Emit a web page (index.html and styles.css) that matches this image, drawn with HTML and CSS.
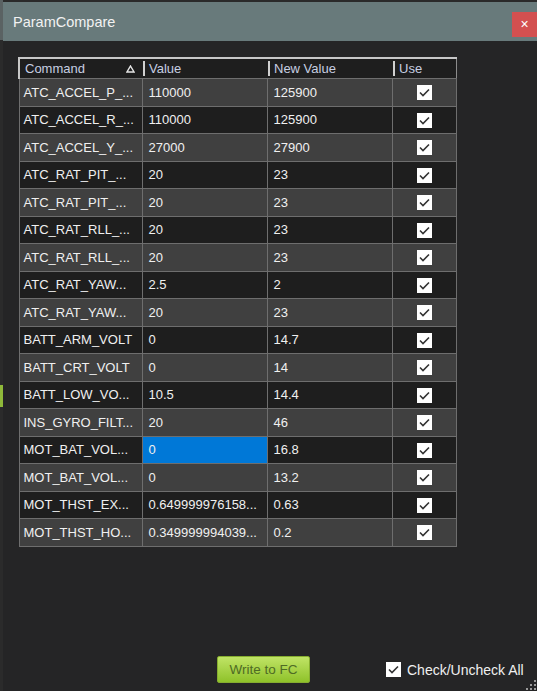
FILE: index.html
```html
<!DOCTYPE html>
<html>
<head>
<meta charset="utf-8">
<link rel="stylesheet" href="styles.css">
</head>
<body>
<div class="page">
  <div class="bgstrip"><div class="bgtop"></div><div class="bggreen"></div></div>
  <div class="window">
    <div class="titlebar">
      <span class="title">ParamCompare</span>
      <span class="close">×</span>
    </div>
    <div class="content">
      <table class="grid">
        <colgroup>
          <col class="w1"><col class="w2"><col class="w3"><col class="w4">
        </colgroup>
        <thead>
          <tr>
            <th class="c1"><span class="hdr">Command</span><svg class="sort" width="9" height="8" viewBox="0 0 9 8"><path d="M4.5 1 L8 7 L1 7 Z" fill="none" stroke="#e6e6e6" stroke-width="1.4"/></svg></th>
            <th class="c2"><span class="sep"></span>Value</th>
            <th class="c3"><span class="sep"></span>New Value</th>
            <th class="c4"><span class="sep"></span>Use</th>
          </tr>
        </thead>
        <tbody id="rows"></tbody>
      </table>
      <div class="spacer"></div>
      <div class="footer">
        <button class="write">Write to FC</button>
        <label class="all"><span class="box big"><svg width="15" height="15" viewBox="0 0 15 15"><path d="M3 7.5 L6 10.5 L12 4.5" fill="none" stroke="#333" stroke-width="1.6"/></svg></span>Check/Uncheck All</label>
      </div>
      <svg class="grip" width="10" height="10" viewBox="0 0 10 10">
        <rect x="8" y="0" width="2" height="2" fill="#9a9a9a"/>
        <rect x="8" y="4" width="2" height="2" fill="#9a9a9a"/>
        <rect x="4" y="4" width="2" height="2" fill="#9a9a9a"/>
        <rect x="8" y="8" width="2" height="2" fill="#9a9a9a"/>
        <rect x="4" y="8" width="2" height="2" fill="#9a9a9a"/>
        <rect x="0" y="8" width="2" height="2" fill="#9a9a9a"/>
      </svg>
    </div>
  </div>
</div>
<script src="app.js"></script>
</body>
</html>
```
FILE: app.js
```js
var data = [
  ["ATC_ACCEL_P_...","110000","125900"],
  ["ATC_ACCEL_R_...","110000","125900"],
  ["ATC_ACCEL_Y_...","27000","27900"],
  ["ATC_RAT_PIT_...","20","23"],
  ["ATC_RAT_PIT_...","20","23"],
  ["ATC_RAT_RLL_...","20","23"],
  ["ATC_RAT_RLL_...","20","23"],
  ["ATC_RAT_YAW...","2.5","2"],
  ["ATC_RAT_YAW...","20","23"],
  ["BATT_ARM_VOLT","0","14.7"],
  ["BATT_CRT_VOLT","0","14"],
  ["BATT_LOW_VO...","10.5","14.4"],
  ["INS_GYRO_FILT...","20","46"],
  ["MOT_BAT_VOL...","0","16.8"],
  ["MOT_BAT_VOL...","0","13.2"],
  ["MOT_THST_EX...","0.649999976158...","0.63"],
  ["MOT_THST_HO...","0.349999994039...","0.2"]
];
var tb = document.getElementById("rows");
var check = '<span class="box"><svg width="15" height="15" viewBox="0 0 15 15"><path d="M3 7.5 L6 10.5 L12 4.5" fill="none" stroke="#333" stroke-width="1.6"/></svg></span>';
data.forEach(function (r, i) {
  var tr = document.createElement("tr");
  tr.className = i % 2 === 0 ? "light" : "dark";
  var sel = i === 13 ? ' class="sel"' : "";
  tr.innerHTML = "<td>" + r[0] + "</td><td" + sel + ">" + r[1] + "</td><td>" + r[2] + "</td><td class=\"use\">" + check + "</td>";
  tb.appendChild(tr);
});
```
FILE: styles.css
```css
html, body {
  margin: 0;
  padding: 0;
  background: #2a2a2a;
}
.page {
  display: flex;
  width: 537px;
  height: 691px;
  overflow: hidden;
}
.bgstrip {
  width: 3px;
  flex: none;
  display: flex;
  flex-direction: column;
  background: #2b2b2b;
}
.bgtop {
  height: 40px;
  background: #5a6263;
}
.bggreen {
  height: 22px;
  margin-top: 345px;
  background: #8fb93a;
}
.window {
  flex: 1;
  display: flex;
  flex-direction: column;
  margin-top: 2px;
  background: #252526;
  font-family: "Liberation Sans", Arial, sans-serif;
}
.titlebar {
  height: 39px;
  flex: none;
  background: #687a7b;
  display: flex;
  align-items: flex-start;
  justify-content: space-between;
}
.title {
  color: #f2f2f2;
  font-size: 14.5px;
  margin: 12px 0 0 10px;
}
.close {
  width: 25px;
  height: 25px;
  margin-top: 10px;
  background: #d35050;
  color: #fff;
  font-size: 14px;
  line-height: 24px;
  text-align: center;
}
.content {
  flex: 1;
  position: relative;
  display: flex;
  flex-direction: column;
  padding: 16px 0 0 15px;
}
.grid {
  border-collapse: collapse;
  table-layout: fixed;
  width: 437px;
  font-size: 13px;
  color: #f0f0f0;
  border: 1px solid #8c8c8c;
}
.w1 { width: 123px; }
.w2 { width: 125px; }
.w3 { width: 125px; }
.w4 { width: 64px; }
.grid th {
  height: 19px;
  padding: 0;
  text-align: left;
  font-weight: normal;
  color: #c7cfe2;
  background: #1e1e1e;
  border-top: 2px solid #c8c8c8;
  white-space: nowrap;
  overflow: hidden;
  font-size: 13px;
}
.grid th.c1 { border-left: 2px solid #c8c8c8; padding-left: 5px; position: relative; }
.sep {
  display: inline-block;
  width: 2px;
  height: 15px;
  background: #d0d0d0;
  vertical-align: -3px;
  margin: 0 4px 0 1px;
}
.sort {
  position: absolute;
  right: 7px;
  top: 6px;
}
.grid td {
  height: 26.5px;
  padding: 0 0 0 6px;
  border: 1px solid #6e6e6e;
  white-space: nowrap;
  overflow: hidden;
}
.grid td:first-child { padding-left: 4px; }
tr.light td { background: #404040; }
tr.dark td { background: #1e1e1e; }
.grid td.sel { background: #0078d7; }
.grid td.use {
  text-align: center;
  padding: 0;
}
.box {
  display: inline-block;
  width: 15px;
  height: 15px;
  background: #fff;
  vertical-align: middle;
  line-height: 0;
}
.box.big {
  margin-right: 6px;
}
.spacer { flex: 1; }
.footer {
  display: flex;
  align-items: center;
  height: 27px;
  margin-bottom: 8px;
  padding-left: 199px;
}
.write {
  width: 93px;
  height: 27px;
  border: 1px solid #86ad2f;
  border-radius: 2px;
  background: linear-gradient(#c0e466, #8fc22a);
  color: #4e6b25;
  font-family: "Liberation Sans", Arial, sans-serif;
  font-size: 13.5px;
  padding: 0;
}
.all {
  display: flex;
  align-items: center;
  margin-left: 76px;
  color: #f0f0f0;
  font-size: 14px;
}
.grip {
  position: absolute;
  right: 1px;
  bottom: 1px;
}
```
